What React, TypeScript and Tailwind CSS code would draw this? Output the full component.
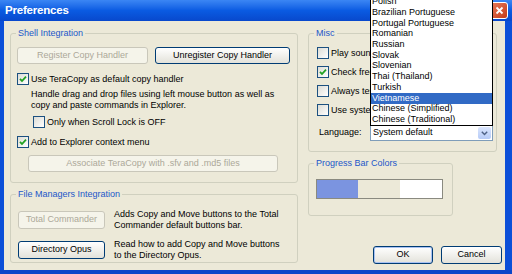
import type { ReactNode } from "react";

const languages = [
  "Polish",
  "Brazilian Portuguese",
  "Portugal Portuguese",
  "Romanian",
  "Russian",
  "Slovak",
  "Slovenian",
  "Thai (Thailand)",
  "Turkish",
  "Vietnamese",
  "Chinese (Simplified)",
  "Chinese (Traditional)",
];

const Check = ({
  checked,
  label,
  className = "",
}: {
  checked?: boolean;
  label: string;
  className?: string;
}) => (
  <div className={`flex items-center h-[12px] ${className}`}>
    <span className="w-[12px] h-[12px] shrink-0 border border-[#1c5180] bg-linear-to-br from-[#dcdcd5] to-white flex items-center justify-center">
      {checked && (
        <svg width="8" height="8" viewBox="0 0 8 8">
          <path d="M1 3.8 L3 6 L7 1.6" fill="none" stroke="#21a121" strokeWidth="1.8" />
        </svg>
      )}
    </span>
    <span className="ml-[2px] text-[9px] leading-[11px] whitespace-nowrap">{label}</span>
  </div>
);

const Btn = ({
  children,
  disabled,
  focus,
  className = "",
}: {
  children: ReactNode;
  disabled?: boolean;
  focus?: boolean;
  className?: string;
}) => (
  <div
    className={`flex items-center justify-center rounded-[3px] border text-[9px] whitespace-nowrap ${
      disabled
        ? "border-[#c9c7ba] text-[#aca899] bg-[#f5f4ea]"
        : "border-[#003c74] text-black bg-linear-to-b from-white to-[#e3e2da]"
    } ${focus ? "shadow-[inset_0_0_0_1px_#a9c2f2]" : ""} ${className}`}
  >
    {children}
  </div>
);

const Group = ({
  title,
  className = "",
  children,
}: {
  title: string;
  className?: string;
  children: ReactNode;
}) => (
  <div className={`border border-[#d0d0bf] rounded-[3px] flex flex-col ${className}`}>
    <span className="-mt-[6px] ml-[5px] self-start px-[2px] bg-[#ece9d8] text-[#2257c9] text-[9px] leading-[11px]">
      {title}
    </span>
    {children}
  </div>
);

export default function App() {
  return (
    <div className="w-[512px] h-[274px] flex flex-col overflow-hidden font-['Liberation_Sans',Arial,sans-serif] text-black">
      {/* title bar */}
      <div className="h-[21px] shrink-0 flex items-center justify-between bg-linear-to-b from-[#3b86f4] via-[#0a5be2] to-[#0848cc] pl-[5px] pr-[4px]">
        <span className="text-white font-bold text-[11.5px] tracking-[-0.2px]">Preferences</span>
        <div className="w-[18px] h-[17px] rounded-[3px] border border-white bg-linear-to-br from-[#e8795a] to-[#c43a15] flex items-center justify-center">
          <svg width="9" height="9" viewBox="0 0 9 9">
            <path d="M1.5 1.5 L7.5 7.5 M7.5 1.5 L1.5 7.5" stroke="white" strokeWidth="1.8" />
          </svg>
        </div>
      </div>

      <div className="flex-1 flex bg-[#0b4fd8]">
        <div className="w-[4px]" />
        <div className="flex-1 flex flex-col bg-[#ece9d8]">
          <div className="flex-1 flex pt-[12px] pl-[6px] pr-[3px] gap-[10px]">
            {/* left column */}
            <div className="w-[288px] flex flex-col">
              <Group title="Shell Integration" className="h-[150px]">
                <div className="flex gap-[7px] ml-[6px] mt-[8px]">
                  <Btn disabled className="w-[131px] h-[17px]">Register Copy Handler</Btn>
                  <Btn className="w-[135px] h-[17px]">Unregister Copy Handler</Btn>
                </div>
                <Check checked label="Use TeraCopy as default copy handler" className="ml-[6px] mt-[9px]" />
                <p className="ml-[20px] mt-[4px] text-[9px] leading-[11px]">
                  Handle drag and drop files using left mouse button as well as
                  <br />
                  copy and paste commands in Explorer.
                </p>
                <Check label="Only when Scroll Lock is OFF" className="ml-[22px] mt-[5px]" />
                <Check checked label="Add to Explorer context menu" className="ml-[6px] mt-[8px]" />
                <Btn disabled className="ml-[17px] mt-[7px] w-[250px] h-[17px]">
                  Associate TeraCopy with .sfv and .md5 files
                </Btn>
              </Group>

              <Group title="File Managers Integration" className="h-[69px] mt-[11px]">
                <div className="flex items-center ml-[7px] mt-[9px]">
                  <Btn disabled className="w-[87px] h-[18px]">Total Commander</Btn>
                  <p className="ml-[9px] text-[9px] leading-[11px]">
                    Adds Copy and Move buttons to the Total
                    <br />
                    Commander default buttons bar.
                  </p>
                </div>
                <div className="flex items-center ml-[7px] mt-[8px]">
                  <Btn className="w-[87px] h-[18px]">Directory Opus</Btn>
                  <p className="ml-[9px] text-[9px] leading-[11px]">
                    Read how to add Copy and Move buttons
                    <br />
                    to the Directory Opus.
                  </p>
                </div>
              </Group>
            </div>

            {/* right column */}
            <div className="w-[194px] flex flex-col">
              <Group title="Misc" className="w-[189px] h-[119px]">
                <div className="flex flex-col gap-[7px] ml-[8px] mt-[8px]">
                  <Check label="Play sound when finished" />
                  <Check checked label="Check free space" />
                  <Check label="Always test after copy" />
                  <Check label="Use system write cache" />
                </div>
                <div className="flex items-center ml-[10px] mt-[9px]">
                  <span className="w-[51px] text-[9px]">Language:</span>
                  <div className="relative w-[123px] h-[16px] border border-[#7f9db9] bg-white flex items-center justify-between pl-[2px] pr-[1px]">
                    <span className="text-[9px]">System default</span>
                    <div className="w-[13px] h-[12px] rounded-[2px] bg-linear-to-b from-[#dbe6fd] to-[#b6cbf7] flex items-center justify-center">
                      <svg width="7" height="5" viewBox="0 0 7 5">
                        <path d="M0.8 0.8 L3.5 3.6 L6.2 0.8" fill="none" stroke="#4d6185" strokeWidth="1.4" />
                      </svg>
                    </div>
                    {/* open dropdown list */}
                    <div className="absolute bottom-full left-[-1px] w-[123px] border border-black bg-white flex flex-col">
                      {languages.map((l) => (
                        <div
                          key={l}
                          className={`h-[10.7px] flex items-center pl-[1px] text-[9px] whitespace-nowrap ${
                            l === "Vietnamese" ? "bg-[#316ac5] text-white" : "text-black"
                          }`}
                        >
                          {l}
                        </div>
                      ))}
                    </div>
                  </div>
                </div>
              </Group>

              <Group title="Progress Bar Colors" className="w-[145px] h-[53px] mt-[11px]">
                <div className="ml-[7px] mt-[10px] w-[127px] h-[20px] border border-[#8a8a80] flex">
                  <div className="w-[41px] bg-[#7b94e0]" />
                  <div className="w-[42px] bg-[#ece9d8]" />
                  <div className="flex-1 bg-white" />
                </div>
              </Group>

              <div className="flex justify-end gap-[8px] mt-[30px]">
                <Btn focus className="w-[60px] h-[18px]">OK</Btn>
                <Btn className="w-[61px] h-[18px]">Cancel</Btn>
              </div>
            </div>
          </div>
          <div className="h-[0px]" />
        </div>
        <div className="w-[7px]" />
      </div>
      <div className="h-[4px] shrink-0 bg-[#0a45c9]" />
    </div>
  );
}
